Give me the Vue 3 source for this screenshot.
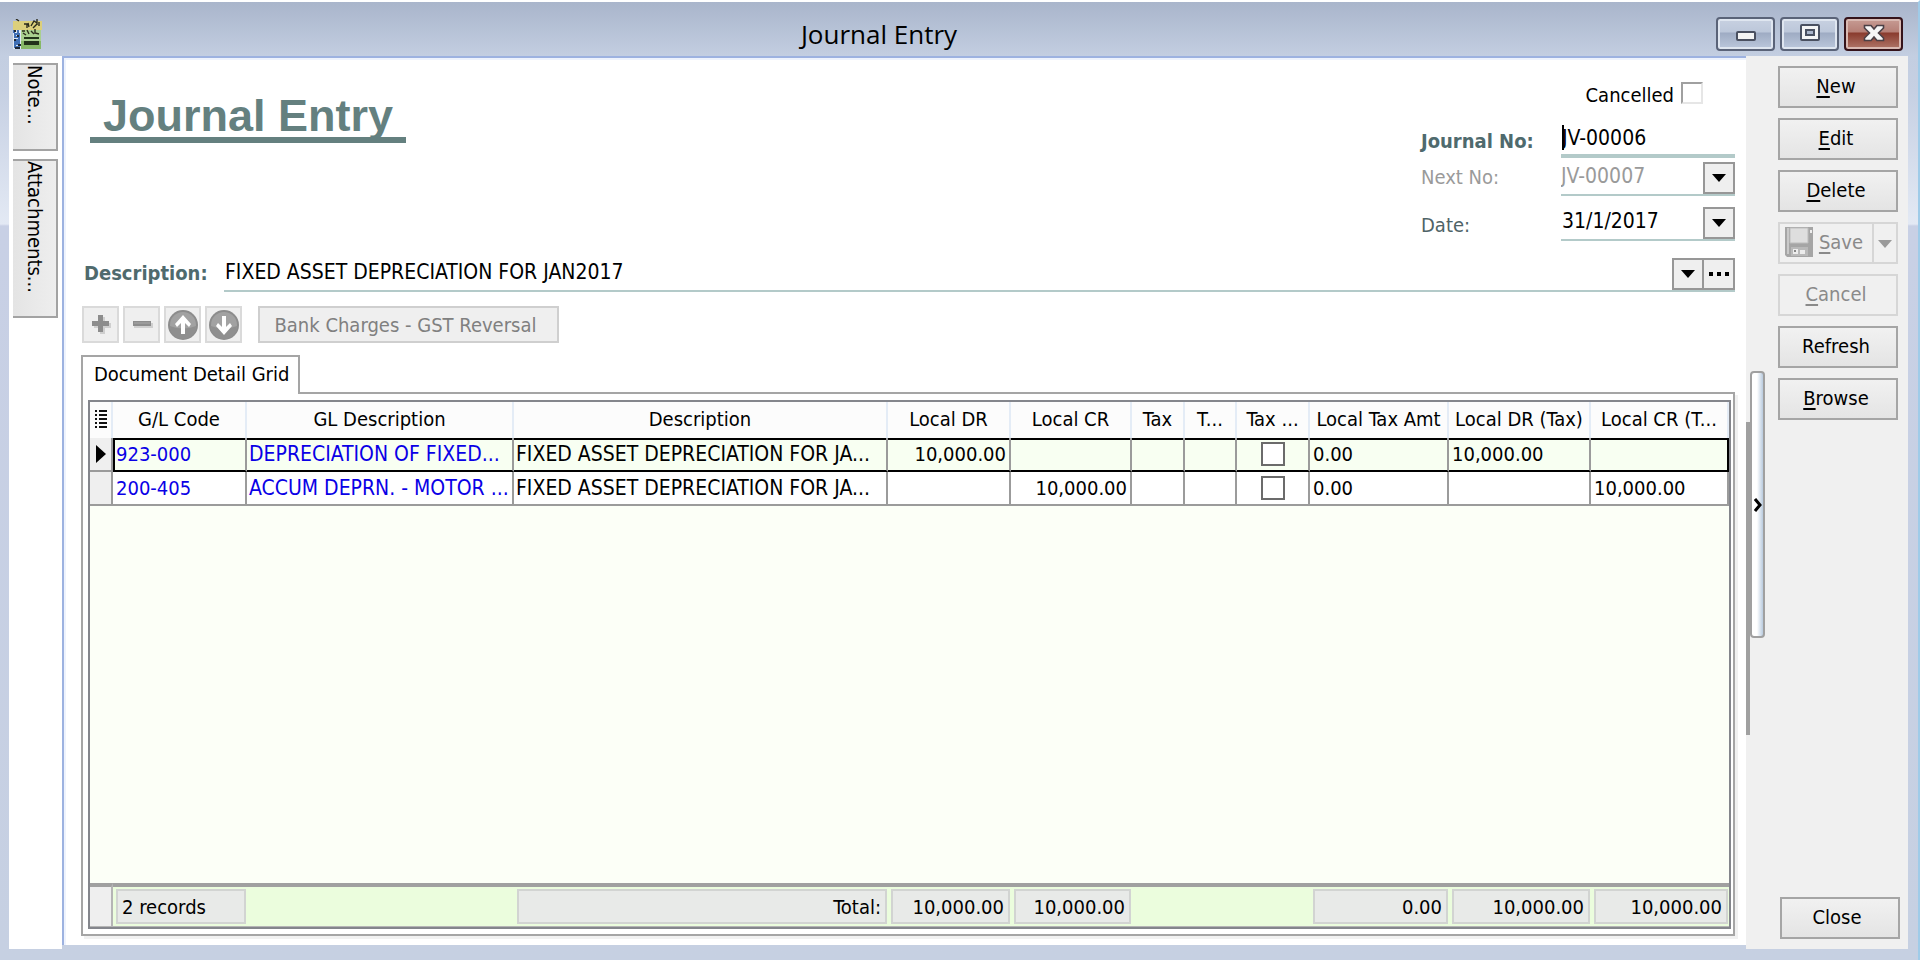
<script setup>
import { ref } from 'vue'

const journalNo = ref('JV-00006')
const nextNo = ref('JV-00007')
const entryDate = ref('31/1/2017')
const description = ref('FIXED ASSET DEPRECIATION FOR JAN2017')
const cancelled = ref(false)

const columns = [
  { key: 'code', label: 'G/L Code', size: 'w-code' },
  { key: 'gl', label: 'GL Description', size: 'w-gl' },
  { key: 'desc', label: 'Description', size: 'w-desc' },
  { key: 'dr', label: 'Local DR', size: 'w-dr' },
  { key: 'cr', label: 'Local CR', size: 'w-cr' },
  { key: 'tax', label: 'Tax', size: 'w-tax' },
  { key: 't', label: 'T...', size: 'w-t' },
  { key: 'incl', label: 'Tax ...', size: 'w-incl' },
  { key: 'amt', label: 'Local Tax Amt', size: 'w-amt' },
  { key: 'drt', label: 'Local DR (Tax)', size: 'w-drt' },
  { key: 'crt', label: 'Local CR (T...', size: 'w-crt' },
]

const rows = ref([
  {
    code: '923-000', gl: 'DEPRECIATION OF FIXED...', desc: 'FIXED ASSET DEPRECIATION FOR JA...',
    dr: '10,000.00', cr: '', tax: '', t: '', incl: false, amt: '0.00', drt: '10,000.00', crt: '',
  },
  {
    code: '200-405', gl: 'ACCUM DEPRN. - MOTOR ...', desc: 'FIXED ASSET DEPRECIATION FOR JA...',
    dr: '', cr: '10,000.00', tax: '', t: '', incl: false, amt: '0.00', drt: '', crt: '10,000.00',
  },
])

const totals = {
  code: '2 records', desc: 'Total:', dr: '10,000.00', cr: '10,000.00',
  amt: '0.00', drt: '10,000.00', crt: '10,000.00',
}
</script>

<template>
  <div class="window">
    <header class="titlebar">
      <svg class="logo" viewBox="0 0 29 30" width="29" height="30" aria-hidden="true">
        <rect x="0" y="10" width="9" height="20" fill="#dfe8f4" />
        <path d="M1 9v5M5 10v4M2 15h4v3H2zM4 20v3H1M6 19v5M2 25h4v3H2z" fill="none" stroke="#3f6fb5" stroke-width="2" />
        <path d="M1 12h2M4 17h2M1 21h2M5 26h3M2 29h5" stroke="#1d2633" stroke-width="2" />
        <rect x="8" y="9" width="20" height="21" fill="#a9cf8f" />
        <rect x="8" y="22" width="20" height="8" fill="#86b866" />
        <path d="M0 2h29v9H0z" fill="#dccf7c" />
        <path d="M3 0l3 2M11 5h3v4M15 4l1 4M18 7l3-5 3 2M20 9l4-4M24 0v6M26 3v4M10 14l3 2M14 11l2 4M18 12l3 3M22 10v4l4 1M9 12h3" fill="none" stroke="#2b2a1c" stroke-width="1.4" />
        <path d="M11 18h15v2H11zM11 22h15v4H11z" fill="#22331a" />
      </svg>
      <span class="caption">Journal Entry</span>
      <div class="winbuttons">
        <button class="winbtn" aria-label="Minimize">
          <svg viewBox="0 0 22 18" width="22" height="18"><rect x="2" y="8" width="18" height="8" rx="1" fill="#f4f4f4" stroke="#4a5060" stroke-width="2" /></svg>
        </button>
        <button class="winbtn" aria-label="Maximize">
          <svg viewBox="0 0 22 18" width="22" height="18"><rect x="2" y="1" width="18" height="15" rx="1" fill="#f4f4f4" stroke="#4a5060" stroke-width="2" /><rect x="7" y="6" width="8" height="5" fill="#a9b4c9" stroke="#4a5060" stroke-width="2" /></svg>
        </button>
        <button class="winbtn close" aria-label="Close window">
          <svg viewBox="0 0 22 18" width="22" height="18"><path d="M1.500 1.500H8L11 5L14 1.500H20.500V4L15.500 9L20.500 14V16.500H14L11 13L8 16.500H1.500V14L6.500 9L1.500 4Z" fill="#f6f6f6" stroke="#4b4046" stroke-width="1.600" /></svg>
        </button>
      </div>
    </header>

    <div class="body">
      <nav class="leftbar">
        <button class="vtab note">Note...</button>
        <button class="vtab attach">Attachments...</button>
      </nav>

      <main class="main">
        <section class="head">
          <h1>Journal Entry</h1>
          <div class="fields">
            <div class="cancelled">
              <label for="cancelled">Cancelled</label>
              <input id="cancelled" v-model="cancelled" type="checkbox" class="check flat" />
            </div>
            <div class="row first">
              <label for="jno" class="strong">Journal No:</label>
              <div class="field focus">
                <span class="caret"></span>
                <input id="jno" v-model="journalNo" type="text" />
              </div>
            </div>
            <div class="row second">
              <label for="nno" class="dim">Next No:</label>
              <div class="field">
                <select id="nno" v-model="nextNo" class="dim">
                  <option>JV-00007</option>
                </select>
                <span class="drop over"><svg viewBox="0 0 14 8" width="14" height="8"><path d="M0 0h14L7 8z" /></svg></span>
              </div>
            </div>
            <div class="row third">
              <label for="date">Date:</label>
              <div class="field">
                <input id="date" v-model="entryDate" type="text" />
                <button class="drop" aria-label="Pick date"><svg viewBox="0 0 14 8" width="14" height="8"><path d="M0 0h14L7 8z" /></svg></button>
              </div>
            </div>
          </div>
        </section>

        <div class="descline">
          <label for="desc" class="strong">Description:</label>
          <div class="field">
            <input id="desc" v-model="description" type="text" />
            <button class="drop" aria-label="Choose description"><svg viewBox="0 0 14 8" width="14" height="8"><path d="M0 0h14L7 8z" /></svg></button>
            <button class="drop more" aria-label="More"><svg viewBox="0 0 20 4" width="20" height="4"><path d="M0 0h4v4H0zM8 0h4v4H8zM16 0h4v4h-4z" /></svg></button>
          </div>
        </div>

        <div class="toolbar">
          <button class="tool" aria-label="Add row"><svg viewBox="0 0 22 22" width="22" height="22"><path d="M10 3h5v6h6v5h-6v6h-5v-6H4V9h6z" fill="#cfcfcf" /><path d="M8 1h5v6h6v5h-6v6H8v-6H2V7h6z" fill="#8d8d8d" /></svg></button>
          <button class="tool" aria-label="Remove row"><svg viewBox="0 0 22 22" width="22" height="22"><path d="M3 9h19v5H3z" fill="#cfcfcf" /><path d="M2 7h18v5H2z" fill="#8d8d8d" /><path d="M3 9h16" stroke="#a9a9a9" /></svg></button>
          <button class="tool" aria-label="Move up"><svg viewBox="0 0 32 32" width="32" height="32"><circle cx="16" cy="16" r="15" fill="#8c8c8c" /><circle cx="16" cy="16" r="13" fill="#a2a2a2" /><path d="M3 17a13 13 0 0 0 26 0q-13 5-26 0z" fill="#8f8f8f" /><path d="M16 6l8 9-2 3-4-4v11h-4V14l-4 4-2-3z" fill="#fff" /></svg></button>
          <button class="tool" aria-label="Move down"><svg viewBox="0 0 32 32" width="32" height="32"><circle cx="16" cy="16" r="15" fill="#8c8c8c" /><circle cx="16" cy="16" r="13" fill="#a2a2a2" /><path d="M3 17a13 13 0 0 0 26 0q-13 5-26 0z" fill="#8f8f8f" /><path d="M16 26l8-9-2-3-4 4V7h-4v11l-4-4-2 3z" fill="#fff" /></svg></button>
          <button class="tool wide">Bank Charges - GST Reversal</button>
        </div>

        <div class="tabs"><button class="tab">Document Detail Grid</button></div>
        <section class="panel">
          <table class="grid">
            <colgroup>
              <col class="w-ind" />
              <col v-for="c in columns" :key="c.key" :class="c.size" />
            </colgroup>
            <thead>
              <tr>
                <th class="ind"><svg viewBox="0 0 12 18" width="12" height="18"><path d="M0 1h2M4 1h8M0 5h2M4 5h8M0 9h2M4 9h8M0 13h2M4 13h8M0 17h2M4 17h8" stroke="#111" stroke-width="2" /></svg></th>
                <th v-for="c in columns" :key="c.key">{{ c.label }}</th>
              </tr>
            </thead>
            <tbody>
              <tr v-for="(r, i) in rows" :key="r.code" class="data" :class="{ current: i === 0 }">
                <td class="ind"><svg v-if="i === 0" viewBox="0 0 10 18" width="10" height="18"><path d="M0 0l10 9-10 9z" /></svg></td>
                <td v-for="c in columns" :key="c.key" :class="c.key">
                  <input v-if="c.key === 'incl'" v-model="r.incl" type="checkbox" class="check" :aria-label="'Tax inclusive ' + r.code" />
                  <template v-else>{{ r[c.key] }}</template>
                </td>
              </tr>
              <tr class="filler"><td colspan="12"></td></tr>
            </tbody>
            <tfoot>
              <tr>
                <td class="ind"></td>
                <td v-for="c in columns" :key="c.key" :class="c.key">
                  <div v-if="totals[c.key]" class="sum">{{ totals[c.key] }}</div>
                </td>
              </tr>
            </tfoot>
          </table>
        </section>
      </main>

      <aside class="side">
        <div class="splitter">
          <span class="track"></span>
          <button class="thumb" aria-label="Collapse side panel"><svg viewBox="0 0 8 14" width="8" height="14"><path d="M1 1l5 6-5 6" fill="none" stroke="#000" stroke-width="3" /></svg></button>
        </div>
        <div class="actions">
          <button class="btn"><span><u>N</u>ew</span></button>
          <button class="btn"><span><u>E</u>dit</span></button>
          <button class="btn"><span><u>D</u>elete</span></button>
          <div class="split">
            <button class="btn save" disabled>
              <svg viewBox="0 0 28 30" width="28" height="30"><path d="M0 0h28v30H2l-2-2z" fill="#a5a5a5" /><path d="M2 1h2v26H2z" fill="#c9c9c9" /><path d="M5 1h18v15H5z" fill="#dedede" stroke="#bdbdbd" /><path d="M25 3h2v3h-2z" fill="#eee" /><path d="M6 20h17v9H6z" fill="#b9b9b9" /><path d="M8 22h5v5H8zM15 23h5v4h-5z" fill="#ececec" /><path d="M9 23h2v2H9z" fill="#888" /></svg>
              <span><u>S</u>ave</span>
            </button>
            <button class="btn savemore" disabled aria-label="Save options"><svg viewBox="0 0 14 8" width="14" height="8"><path d="M0 0h14L7 8z" fill="#9a9a9a" /></svg></button>
          </div>
          <button class="btn" disabled><span><u>C</u>ancel</span></button>
          <button class="btn">Refresh</button>
          <button class="btn"><span><u>B</u>rowse</span></button>
          <button class="btn bottom">Close</button>
        </div>
      </aside>
    </div>
  </div>
</template>

<style>
body {
  margin: 0;
  background: #c6d0e2;
}
</style>

<style scoped>
.window, .window * {
  box-sizing: border-box;
}
.window {
  display: flex;
  flex-direction: column;
  min-height: 100vh;
  padding: 0 10px 11px 9px;
  border-top: 2px solid #fff;
  border-right: 2px solid #9fcbe8;
  background: linear-gradient(#a9b5cb 0, #c3cee1 54px, #c6d0e3 90px, #e3e9f4 222px, #c8d0e5 224px, #c6d0e2 100%);
  color: #000;
  font: 20px/24px "DejaVu Sans Condensed", "Noto Sans", sans-serif;
}
button, input, select {
  font: inherit;
  color: inherit;
  margin: 0;
  padding: 0;
  border: 0;
  border-radius: 0;
  background: none;
}
.titlebar {
  display: flex;
  align-items: center;
  height: 54px;
  margin: 0 -10px 0 -9px;
  padding: 10px 15px 0 13px;
  background: linear-gradient(#a9b5cb, #c3cee1);
}
.caption {
  flex: 1;
  text-align: center;
  font: 26px/32px "Open Sans", "Noto Sans", sans-serif;
}
.winbuttons {
  display: flex;
  gap: 5px;
  align-self: flex-start;
  margin-top: 5px;
}
.winbtn {
  display: flex;
  align-items: center;
  justify-content: center;
  width: 59px;
  height: 34px;
  border: 2px solid #5a6378;
  border-radius: 4px;
  background: linear-gradient(#c8d1e1 0, #bcc7da 44%, #9eabc3 46%, #bcc8dc 100%);
  box-shadow: inset 0 0 0 2px #dfe6f0;
}
.winbtn svg {
  margin-bottom: 2px;
}
.winbtn.close {
  border-color: #35131a;
  background: linear-gradient(#c79c94 0, #b57f76 44%, #893a2d 46%, #b0776a 100%);
  box-shadow: inset 0 0 0 2px #d9b9b2;
}
.body {
  display: flex;
  flex: 1;
}
.leftbar {
  display: flex;
  flex-direction: column;
  gap: 8px;
  width: 53px;
  padding: 7px 4px 0 4px;
  background: #fff;
}
.vtab {
  width: 45px;
  padding: 0;
  border: 2px solid #a3a3a3;
  border-left: 0;
  background: linear-gradient(90deg, #e4e4e4, #eeeeee);
  writing-mode: vertical-rl;
  text-align: left;
  line-height: 20px;
}
.note {
  height: 88px;
}
.attach {
  height: 159px;
}
.main {
  display: flex;
  flex: 1;
  flex-direction: column;
  min-width: 0;
  margin-bottom: 4px;
  padding: 20px 11px 9px 18px;
  border-top: 2px solid #9db2e0;
  border-left: 2px solid #9db2e0;
  background: #fff;
  box-shadow: inset 2px 2px 0 #eef3fd;
}
.head {
  display: flex;
  justify-content: space-between;
  align-items: flex-start;
  padding-top: 4px;
}
h1 {
  margin: 13px 0 0 8px;
  padding: 0 13px;
  border-bottom: 6px solid #64807f;
  color: #64807f;
  font: bold 45px/42px "Liberation Sans", sans-serif;
}
.fields {
  width: 314px;
}
.cancelled {
  display: flex;
  align-items: center;
  justify-content: flex-end;
  gap: 7px;
  height: 22px;
  padding-right: 32px;
}
.cancelled label {
  padding-top: 4px;
}
.check {
  appearance: none;
  display: block;
  width: 24px;
  height: 24px;
  border: 2px solid #6b6b6b;
  background: #fff;
}
.check.flat {
  width: 22px;
  height: 22px;
  border-color: #a0a0a0 #e6e6e6 #e6e6e6 #a0a0a0;
}
.row {
  display: grid;
  grid-template-columns: 140px 1fr;
  align-items: center;
}
.row label {
  color: #4f6367;
}
.first {
  margin-top: 20px;
}
.second {
  margin-top: 4px;
}
.third {
  margin-top: 11px;
}
.strong, .row .strong {
  color: #4f6a6d;
  font-weight: bold;
}
.dim, .row .dim {
  color: #9a9a9a;
}
.second label, .descline label {
  padding-bottom: 4px;
}
.third label {
  padding-top: 2px;
}
.field {
  display: flex;
  position: relative;
  height: 34px;
  border-bottom: 2px solid #b3cac9;
  font-size: 21px;
}
.field.focus {
  border-bottom-width: 4px;
}
.field input, .field select {
  flex: 1;
  width: 0;
  min-width: 0;
  height: 28px;
  outline: 0;
  appearance: none;
}
.field input {
  padding-left: 1px;
}
.caret {
  position: absolute;
  top: 1px;
  left: 1px;
  width: 2px;
  height: 25px;
  background: #000;
}
.drop {
  display: flex;
  align-items: center;
  justify-content: center;
  width: 32px;
  height: 32px;
  border: 2px solid #979797;
  background: #efefef;
}
.drop.over {
  position: absolute;
  top: 0;
  right: 0;
  pointer-events: none;
}
.drop.more {
  width: 33px;
  margin-left: -2px;
}
.descline {
  display: grid;
  grid-template-columns: 140px 1fr;
  align-items: center;
  margin-top: 17px;
  padding-left: 2px;
}
.toolbar {
  display: flex;
  gap: 4px;
  margin-top: 14px;
}
.tool {
  display: flex;
  align-items: center;
  justify-content: center;
  width: 37px;
  height: 37px;
  border: 2px solid #dadada;
  background: #efefef;
}
.tool.wide {
  width: 301px;
  margin-left: 12px;
  padding-right: 6px;
  border-color: #cfcfcf;
  color: #808080;
}
.tabs {
  display: flex;
  margin: 12px 0 -2px -1px;
}
.tab {
  z-index: 1;
  height: 39px;
  padding: 0 9px 4px 11px;
  border: 2px solid #a5a5a5;
  border-bottom: 0;
  background: #fff;
}
.panel {
  display: flex;
  flex: 1;
  flex-direction: column;
  margin-left: -1px;
  padding: 6px 2px 5px 5px;
  border: 2px solid #a5a5a5;
  background: #fff;
  box-shadow: 3px 3px 0 #f1f1f1;
}
.grid {
  flex: 1;
  width: 100%;
  table-layout: fixed;
  border: 2px solid #84868c;
  border-spacing: 0;
  background: #fcfff7;
}
.w-ind { width: 23px; }
.w-code { width: 134px; }
.w-gl { width: 267px; }
.w-dr { width: 123px; }
.w-cr { width: 121px; }
.w-tax { width: 53px; }
.w-t { width: 52px; }
.w-incl { width: 73px; }
.w-amt { width: 139px; }
.w-drt { width: 142px; }
.w-crt { width: 138px; }
th {
  height: 36px;
  padding: 0 0 2px;
  border-right: 2px solid #e4ecf6;
  background: #fcfcfc;
  font-weight: normal;
  white-space: nowrap;
  overflow: hidden;
}
th svg, td svg {
  display: block;
  margin: 0 auto;
}
.data td {
  height: 34px;
  padding: 0 3px 1px;
  border-right: 2px solid #9b9b9b;
  border-bottom: 2px solid #9b9b9b;
  background: #fff;
  white-space: nowrap;
  overflow: hidden;
}
.data .ind, tfoot .ind {
  padding: 0;
  background: #efefef;
}
.data.current td:not(.ind) {
  border-bottom-color: #000;
  background: #f8fff2;
  box-shadow: inset 0 2px 0 #000;
}
.data.current .code {
  box-shadow: inset 2px 2px 0 #000 !important;
}
.data.current .crt {
  border-right-color: #000;
}
.data .code, .data .gl {
  color: #0a00e6;
}
.data .gl, .data .desc {
  padding-left: 2px;
  font-size: 21px;
}
.data .dr, .data .cr {
  text-align: right;
}
.data .incl .check {
  margin: 0 auto;
}
.filler td {
  padding: 0;
}
tfoot td {
  height: 44px;
  padding: 2px 1px 2px 3px;
  border-top: 4px solid #a0a0a0;
  border-bottom: 1px solid #b5b5b5;
  background: #ebfddd;
}
tfoot .ind {
  border-right: 2px solid #b5b5b5;
}
.sum {
  height: 35px;
  padding: 0 4px;
  border: 2px solid #d2d4d2;
  background: #e8eae8;
  line-height: 32px;
  text-align: right;
}
.code .sum {
  text-align: left;
}
.side {
  display: flex;
  width: 162px;
  background: #f0f0f0;
}
.splitter {
  display: flex;
  position: relative;
  align-items: center;
  width: 32px;
  padding: 4px 0 0 4px;
}
.track {
  position: absolute;
  left: 0;
  top: 41%;
  width: 4px;
  height: 35%;
  background: #a0a0a0;
}
.thumb {
  display: flex;
  align-items: center;
  justify-content: center;
  width: 15px;
  height: 30%;
  border: 2px solid #a0a0a0;
  border-radius: 4px;
  background: linear-gradient(90deg, #fff 45%, #b9cbdf);
}
.actions {
  display: flex;
  flex: 1;
  flex-direction: column;
  gap: 10px;
  padding: 10px 10px 10px 0;
}
.btn {
  display: flex;
  align-items: center;
  justify-content: center;
  height: 42px;
  padding: 0 4px 2px 0;
  border: 2px solid #a5a5a5;
  background: linear-gradient(#f1f1f1, #e4e4e4);
}
.btn:disabled {
  border-color: #d6d6d6;
  background: #f0f0f0;
  color: #8a8a8a;
}
.btn u {
  text-underline-offset: 3px;
}
.split {
  display: flex;
}
.save {
  flex: 1;
  gap: 6px;
}
.savemore {
  width: 26px;
  margin-left: -2px;
  padding: 2px 0 0;
}
.bottom {
  margin: auto -2px 0 2px;
  padding-right: 6px;
}
</style>
